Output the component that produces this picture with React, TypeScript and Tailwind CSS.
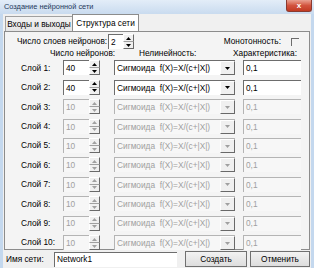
import React from "react";

const rows = Array.from({ length: 10 }, (_, i) => ({
  n: i + 1,
  value: i < 2 ? "40" : "10",
  enabled: i < 2,
}));

function Arrow({ up, enabled }: { up?: boolean; enabled: boolean }) {
  return (
    <svg width="5" height="3" viewBox="0 0 5 3" className="block">
      <polygon
        points={up ? "2.5,0 5,3 0,3" : "0,0 5,0 2.5,3"}
        fill={enabled ? "#000" : "#a0a0a0"}
      />
    </svg>
  );
}

function Spinner({ enabled }: { enabled: boolean }) {
  return (
    <div className="flex h-[15px] w-[11px] flex-col">
      <div className="flex flex-1 items-center justify-center border-b border-r border-b-[#a0a0a0] border-r-[#696969] border-t border-l border-t-white border-l-white bg-[#f0f0f0]">
        <Arrow up enabled={enabled} />
      </div>
      <div className="flex flex-1 items-center justify-center border-b border-r border-b-[#696969] border-r-[#696969] border-l border-l-white bg-[#f0f0f0]">
        <Arrow enabled={enabled} />
      </div>
    </div>
  );
}

function Field({
  text,
  enabled = true,
  className = "",
}: {
  text: string;
  enabled?: boolean;
  className?: string;
}) {
  return (
    <div
      className={`flex h-[15px] items-center whitespace-nowrap border-l border-t pl-[2px] ${
        enabled
          ? "border-l-[#6d6d6d] border-t-[#6d6d6d] bg-white text-black"
          : "border-l-[#b4b4b4] border-t-[#b4b4b4] bg-[#f7f7f7] text-[#a0a0a0]"
      } ${className}`}
    >
      {text}
    </div>
  );
}

export default function App() {
  return (
    <div className="flex h-[268px] w-[314px] flex-col overflow-hidden bg-[#f0f0f0] text-[8.3px] leading-none text-black [font-family:'Liberation_Sans',Arial,sans-serif]">

      {/* Title bar */}

      <div className="flex h-[14px] shrink-0 items-start justify-between bg-gradient-to-b from-[#e3edf8] to-[#c9dbef] pl-[4px]">
        <span className="pt-[3px] text-[7.4px] text-[#1e395b]">Создание нейронной сети</span>
        <div className="mr-[2px] flex h-[12px] w-[26px] items-center justify-center rounded-b-[3px] border border-t-0 border-[#8a3a30] bg-gradient-to-b from-[#e8a091] via-[#d2533e] to-[#c23a22] text-[8px] font-bold text-white">
          x
        </div>
      </div>

      <div className="flex flex-1 flex-col border-x-[3px] border-x-[#c4d8ee] px-[1px]">

        {/* Tabs */}

        <div className="flex h-[17px] shrink-0 items-end pl-[1px]">
          <div className="flex h-[15px] w-[68px] items-center justify-center border border-b-0 border-[#a0a0a0] bg-gradient-to-b from-[#f3f3f3] to-[#e5e5e5]">
            Входы и выходы
          </div>
          <div className="-ml-px flex h-[17px] w-[67px] items-center justify-center border border-b-0 border-[#8c8c8c] bg-white">
            Структура сети
          </div>
        </div>

        {/* Panel */}

        <div className="flex h-[219px] shrink-0 flex-col border border-[#8c8c8c] bg-[#f4f4f4]">

          <div className="flex h-[20px] items-center pl-[12px] pt-[2px]">
            <span className="w-[91px]">Число слоев нейронов:</span>
            <Field text="2" className="w-[15px]" />
            <Spinner enabled />
            <span className="ml-auto">Монотонность:</span>
            <div className="ml-[10px] mr-[10px] h-[8px] w-[8px] border-l border-t border-[#6d6d6d]" />
          </div>

          <div className="flex h-[12px] items-center whitespace-nowrap">
            <span className="ml-[45px] w-[89px]">Число нейронов:</span>
            <span className="w-[94px]">Нелинейность:</span>
            <span>Характеристика:</span>
          </div>

          <div className="grid grid-cols-[42px_26px_11px_14px_121px_8px_58px] auto-rows-[19.4px] items-center pl-[16px] pt-[1px]">
            {rows.map((r) => (
              <React.Fragment key={r.n}>
                <span className="whitespace-nowrap">Слой {r.n}:</span>
                <Field text={r.value} enabled={r.enabled} />
                <Spinner enabled={r.enabled} />
                <span />
                <div
                  className={`flex h-[15px] items-center border-l border-t ${
                    r.enabled
                      ? "border-l-[#6d6d6d] border-t-[#6d6d6d] bg-white text-black"
                      : "border-l-[#b4b4b4] border-t-[#b4b4b4] bg-[#f7f7f7] text-[#a0a0a0]"
                  }`}
                >
                  <span className="flex-1 whitespace-pre pl-[2px]">Сигмоида  f(X)=X/(c+|X|)</span>
                  <div className="flex h-full w-[15px] items-center justify-center border-b border-r border-b-[#696969] border-r-[#696969] border-l border-t border-l-white border-t-white bg-[#f0f0f0]">
                    <Arrow enabled={r.enabled} />
                  </div>
                </div>
                <span />
                <Field text="0,1" enabled={r.enabled} />
              </React.Fragment>
            ))}
          </div>
        </div>

        {/* Footer */}

        <div className="flex flex-1 items-center whitespace-nowrap pl-[2px]">
          <span className="w-[48px]">Имя сети:</span>
          <Field text="Network1" className="w-[123px]" />
          <button className="ml-[8px] h-[16px] w-[62px] border border-[#707070] bg-gradient-to-b from-[#f2f2f2] to-[#dddddd]">
            Создать
          </button>
          <button className="ml-[3px] h-[16px] w-[60px] border border-[#707070] bg-gradient-to-b from-[#f2f2f2] to-[#dddddd]">
            Отменить
          </button>
        </div>
      </div>
    </div>
  );
}
